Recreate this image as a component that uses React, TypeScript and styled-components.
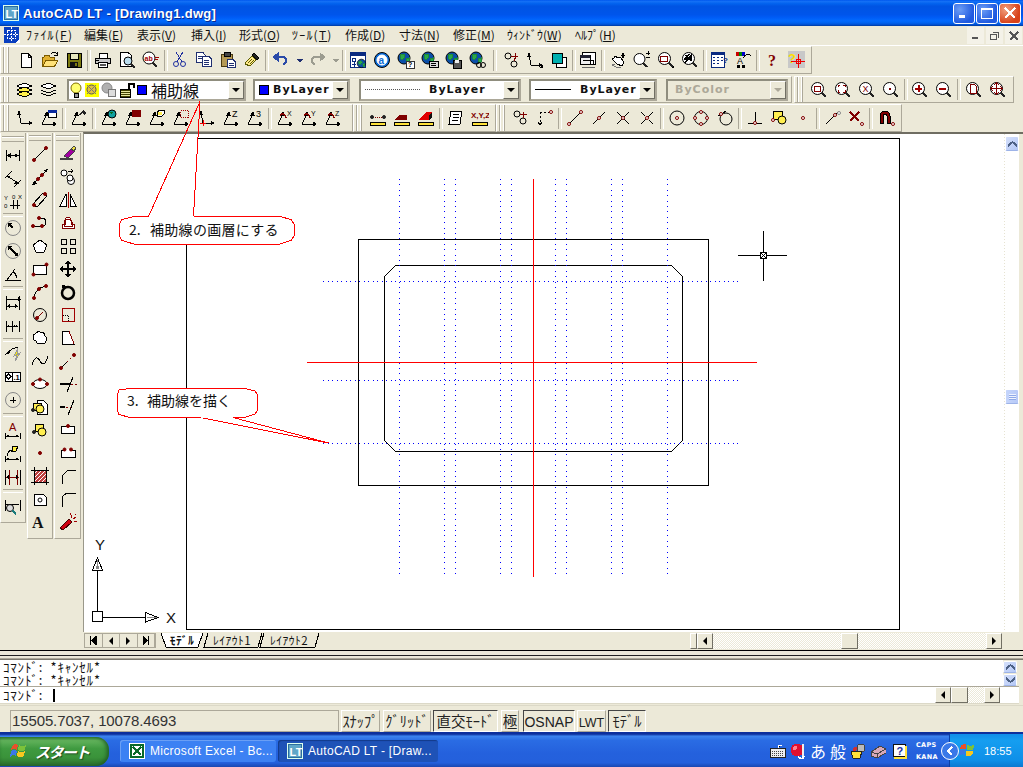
import React from "react";
import styled, { createGlobalStyle } from "styled-components";

const CREAM = "#ECE9D8";
const SHADE = "#ACA899";
const JP = `"Noto Sans CJK JP", "Liberation Sans", sans-serif`;

const Global = createGlobalStyle`
  html, body { margin: 0; padding: 0; background: ${CREAM}; overflow: hidden; }
  * { box-sizing: border-box; }
  svg { shape-rendering: crispEdges; display: block; flex: none; }
  svg text { shape-rendering: auto; }
`;

/* ---------- icon primitives ---------- */
type PP = { d: string; c?: string; f?: string; w?: number; strokeDasharray?: string };
const P = ({ d, c = "#000", f = "none", w = 1, strokeDasharray }: PP) => (
  <path d={d} stroke={c} fill={f} strokeWidth={w} strokeDasharray={strokeDasharray} />
);
const Box = ({ x, y, w, h, f = "none", c = "#000" }: { x: number; y: number; w: number; h: number; f?: string; c?: string }) => (
  <rect x={x + 0.5} y={y + 0.5} width={w} height={h} fill={f} stroke={c} />
);
const Dot = ({ x, y, r = 1.5, f = "#fff", c = "#800000" }: { x: number; y: number; r?: number; f?: string; c?: string }) => (
  <circle cx={x} cy={y} r={r} fill={f} stroke={c} style={{ shapeRendering: "auto" }} />
);
const Ring = ({ x, y, r, f = "none", c = "#000", w = 1 }: { x: number; y: number; r: number; f?: string; c?: string; w?: number }) => (
  <circle cx={x} cy={y} r={r} fill={f} stroke={c} strokeWidth={w} style={{ shapeRendering: "auto" }} />
);
const Tx = ({ x, y, s = 7, c = "#000", b = false, t }: { x: number; y: number; s?: number; c?: string; b?: boolean; t: string }) => (
  <text x={x} y={y} fontSize={s} fill={c} fontWeight={b ? 700 : 400} fontFamily="Liberation Sans, sans-serif">{t}</text>
);
const Mag = ({ children }: { children?: React.ReactNode }) => (
  <>
    <Ring x={7.5} y={7.5} r={6} f="#fff" />
    <P d="M12 12L16 16" c="#222" w={2} />
    {children}
  </>
);
const Axes = () => (
  <>
    <P d="M2 15L7 5M2 15H14" />
    <P d="M7 3l-2 3h3zM16 15l-3-2v4z" f="#000" />
  </>
);
const AxesV = () => (
  <>
    <P d="M3 3L5 14H15" />
    <P d="M3 2l-1 3h2zM16 14l-3-1.5v3z" f="#000" />
  </>
);
const Globe = ({ children }: { children?: React.ReactNode }) => (
  <>
    <Ring x={7} y={7} r={6} f="#0A4FA8" />
    <P d="M3 4L7 3 8 6 5 9 3 7zM9 8l3-1v4l-2 1z" c="#1E8A38" f="#29A84A" />
    {children}
  </>
);
const Rule = () => <Box x={1} y={13} w={15} h={3} f="#FFE23A" />;
const Marker = ({ x, y }: { x: number; y: number }) => <Dot x={x} y={y} />;
const Rot = ({ l }: { l: string }) => (
  <>
    <Axes />
    <P d="M4 6Q8 3 10 9" c="#800000" w={1.5} />
    <Tx x={11} y={7} s={7} t={l} />
  </>
);

const icons: Record<string, React.ReactNode> = {
  /* row 1 */
  new: <><P d="M4.5 2.5H11L14.5 6V16.5H4.5Z" f="#fff" /><P d="M11 2.5V6H14.5" /></>,
  open: <><P d="M1.5 15.5V6H3L4 4H8L9 6H13V15.5Z" c="#7A5A00" f="#E0B030" /><P d="M1.5 15.5L5 9H17L13.5 15.5Z" c="#7A5A00" f="#FFE27A" /><P d="M10 3Q13 0 16 3M16 1V4H13" /></>,
  save: <><Box x={2} y={2} w={14} h={14} f="#7C7A10" /><Box x={5} y={2} w={8} h={6} f="#E8E8C0" /><rect x={5} y={11} width={8} height={5} fill="#111" /><rect x={10} y={12} width={2} height={3} fill="#7C7A10" /></>,
  print: <><P d="M5 7V2H13V7" f="#fff" /><P d="M1.5 12V7.5H16.5V12Z" f="#C8C8C8" /><P d="M4.5 11H13.5V16H4.5Z" f="#fff" /><P d="M6 13H12M6 14.5H12" c="#555" /><P d="M2 9H5" /></>,
  preview: <><P d="M2.5 1.5H10L13 4V15H2.5Z" f="#fff" /><Ring x={10} y={10} r={4} f="#BDE" /><P d="M13 13L17 17" c="#222" w={2} /></>,
  spell: <><Ring x={7} y={7} r={6} f="#fff" /><Tx x={2.5} y={9.5} s={7} c="#A00000" b t="ab" /><P d="M13 6H17M13 8H16" c="#A00000" /><P d="M11 12L15 16" c="#222" w={2} /></>,
  cut: <><P d="M5 1L11 11M12 1L6 11" c="#1F2F9F" /><Ring x={5} y={13} r={2.5} c="#1F2F9F" /><Ring x={12} y={13} r={2.5} c="#1F2F9F" /></>,
  copy: <><P d="M1.5 1.5H8L10 4V11H1.5Z" f="#fff" c="#1F2F70" /><P d="M7.5 5.5H14L16.5 8V15.5H7.5Z" f="#fff" c="#1F2F70" /><P d="M3 5H7M3 7H7M9 9H14M9 11H14M9 13H14" c="#1F2F70" /></>,
  paste: <><P d="M2.5 3.5H13.5V15.5H2.5Z" f="#B59A55" c="#4A3A10" /><Box x={5} y={1} w={6} h={4} f="#444" /><P d="M8.5 8.5H14L16.5 11V16.5H8.5Z" f="#fff" c="#1F2F70" /><P d="M10 12H15M10 14H15" c="#1F2F70" /></>,
  match: <><P d="M11 2L16 7 14 9 9 4Z" f="#222" /><P d="M9 5L13 9 7 15 2 13 3 11Z" f="#FFE98A" c="#5A5A00" /><P d="M5 12L9 8M7 13L11 9" c="#5A5A00" /></>,
  undo: <><P d="M3 6H10Q15 6 14 11 13 13 11 13" c="#2A4AA8" w={2} /><P d="M1 6L6 2V10Z" f="#2A4AA8" c="#2A4AA8" /></>,
  redo: <><P d="M15 6H8Q3 6 4 11 5 13 7 13" c="#9C9C90" w={2} /><P d="M17 6L12 2V10Z" f="#9C9C90" c="#9C9C90" /></>,
  dropA: <path d="M6 8H13L9.5 11.5Z" fill="#1F2F70" />,
  dropB: <path d="M6 8H13L9.5 11.5Z" fill="#9C9C90" />,
  propsWin: <><Box x={1} y={1} w={15} h={15} f="#fff" c="#0A2A80" /><rect x={1} y={1} width={16} height={4} fill="#0A2A80" /><Box x={3} y={7} w={3} h={3} c="#0A2A80" /><P d="M3 13H7M5 10V16" c="#0A2A80" /><g transform="translate(7.5 7.5) scale(0.7)"><Globe /></g></>,
  aBlue: <><Ring x={9} y={9} r={7.5} f="#0A6CD8" /><Ring x={9} y={9} r={5} f="#fff" c="#fff" /><text x={5.5} y={12.5} fontSize={10} fontWeight={700} fill="#0A6CD8" fontFamily="Liberation Sans">a</text></>,
  gl1: <><Globe /><P d="M9 10H17V17H9Z" f="#fff" c="#333" /><Tx x={11} y={16} s={7} b t="?" /></>,
  gl2: <><Globe /><Box x={8} y={10} w={9} h={6} f="#ddd" /><P d="M10 12H15M10 14H15" /></>,
  gl3: <><Globe /><Box x={8} y={9} w={8} h={8} f="#555" /><rect x={10} y={9} width={4} height={3} fill="#eee" /></>,
  gl4: <><Globe /><Ring x={10} y={14} r={2.5} /><Ring x={14} y={14} r={2.5} /></>,
  track: <><Ring x={6} y={5} r={3} /><Ring x={12} y={13} r={3} /><P d="M9 5H16M13 2V8M12 7V10" c="#800000" /></>,
  ucsSm: <><AxesV /><path d="M17 17h-4l4-4z" fill="#000" /></>,
  layerSq: <><Box x={6} y={6} w={10} h={10} f="#fff" /><Box x={2} y={2} w={10} h={10} f="#00B0B0" /></>,
  plotWin: <><Box x={3} y={1} w={13} h={12} f="#fff" /><Box x={1} y={4} w={10} h={9} f="#EEE" /><rect x={1} y={4} width={10} height={3} fill="#223" /><P d="M4 9H14V13" /><P d="M3 16H16" c="#666" /></>,
  hand: <><P d="M3 8L8 13 13 15 15 11 11 6 9 7 6 5 5 7Z" f="#fff" /><P d="M6 13L3 14 7 16 12 16" c="#777" /><P d="M14 2V7M12 4.5H16" w={1.5} /></>,
  zoomRt: <><Ring x={6.5} y={8} r={5.5} f="#fff" /><P d="M10.5 12L14 16" c="#222" w={2} /><P d="M13 2H17M15 0V4M13 6H17" /></>,
  zoomW: <Mag><P d="M3 5.5H10V10H3Z" c="#800000" /><path d="M17 17h-3l3-3z" /></Mag>,
  zoomP: <Mag><P d="M8 3L4 8H7L4 12M5 4L10 10" w={1.5} /><path d="M11 2L7 6 11 9Z" /></Mag>,
  table: <><Box x={1} y={1} w={13} h={15} f="#fff" c="#0A2A80" /><rect x={1} y={1} width={13} height={3} fill="#0A2A80" /><P d="M3 6H5M7 6H9M11 6H13M3 9H5M7 9H9M11 9H13M3 12H5M7 12H9" c="#0A2A80" /><Tx x={13} y={12} s={8} b c="#0A2A80" t="?" /></>,
  aColor: <><rect x={2} y={1} width={3} height={4} fill="#C00" /><rect x={5} y={1} width={3} height={4} fill="#080" /><rect x={8} y={1} width={3} height={4} fill="#00C" /><Tx x={3} y={13} s={9} t="A" /><P d="M9 7Q13 1 17 5" /><rect x={3} y={14} width={3} height={3} /><rect x={8} y={14} width={3} height={3} /></>,
  qmark: <text x={4} y={15} fontSize={16} fontWeight={700} fill="#800000" fontFamily="Liberation Serif">?</text>,
  helpX: <><rect x={0} y={0} width={17} height={17} fill="#C8C8C8" /><text x={0} y={12} fontSize={13} fontWeight={700} fill="#FFE000" fontFamily="Liberation Sans">?</text><P d="M3 10H17M10 3V17" c="#F00000" /><Box x={8} y={8} w={4} h={4} c="#F00000" /></>,
  /* row 2 */
  layerMgr: <><P d="M1 5L8 2 16 5 8 8Z" f="#fff" /><P d="M1 9L8 6 16 9 8 12Z" f="#FFF04A" /><P d="M1 13L8 10 16 13 8 16Z" f="#FFF04A" /></>,
  layerPrev: <><P d="M1 5L8 2 16 5 8 8Z" f="#fff" /><P d="M1 9L8 12 16 9M1 12L8 15 16 12" /></>,
  bulb: <><Ring x={8} y={7} r={5} f="#FFFF70" c="#807000" /><P d="M6 12H10V16H6Z" f="#999" /></>,
  sun: <><Box x={2} y={2} w={13} h={13} f="#FFFF00" c="#FFFF00" /><Ring x={8.5} y={8.5} r={4.5} f="#E0C040" c="#555" /><P d="M4 4L13 13M13 4L4 13" c="#777" /></>,
  vp: <><Ring x={7} y={7} r={5} f="#B0B0B0" c="#888" /><Box x={8} y={8} w={7} h={7} f="#DDD" c="#777" /></>,
  lock: <><Box x={2} y={8} w={10} h={8} f="#444400" /><P d="M3 10H12M3 12H12M3 14H12" c="#E8E8A0" /><P d="M11 8V3H16V7" w={1.5} /></>,
  z1: <Mag><P d="M4 5.5H10V10H4Z" c="#800000" /></Mag>,
  z2: <Mag><P d="M4 6V4H6M9 4H11V6M4 9V11H6M11 9V11H9" c="#800000" /></Mag>,
  z3: <Mag><Tx x={4.5} y={11} s={9} c="#800000" t="X" /></Mag>,
  z4: <Mag><Box x={6.5} y={6.5} w={1} h={1} c="#800000" /></Mag>,
  zin: <Mag><P d="M4 7.5H11M7.5 4V11" c="#A00000" w={2} /></Mag>,
  zout: <Mag><P d="M4 7.5H11" c="#A00000" w={2} /></Mag>,
  zall: <Mag><P d="M5 3H9L11 5V12H5Z" f="#fff" c="#800000" /></Mag>,
  zext: <Mag><P d="M2 7.5H13M7.5 2V13" c="#800000" /><P d="M4 5L2 7.5 4 10M11 5L13 7.5 11 10M5 4L7.5 2 10 4M5 11L7.5 13 10 11" c="#800000" /></Mag>,
  /* row 3 */
  ucs: <AxesV />,
  ucsPrev: <><Axes /><Box x={8} y={1} w={8} h={7} f="#fff" /><rect x={8} y={1} width={9} height={3} fill="#0A2A9F" /></>,
  ucsObj: <><Axes /><path d="M8 6L13 1 16 4 14 6 12 4 10 6Z" fill="#222" /></>,
  ucsWorld: <><Axes /><Ring x={12} y={5} r={4} f="#10A0A0" /><path d="M10 3L13 3 12 6Z" fill="#0A6C20" /></>,
  ucsDark: <><Axes /><rect x={8} y={1} width={9} height={7} fill="#800000" /></>,
  ucsFace: <><Axes /><P d="M9 3L12 1H16V5L14 7H9Z" f="#FFF" /><rect x={10} y={3} width={4} height={3} fill="#FFEE50" /></>,
  ucsView: <><Axes /><P d="M8.5 1.5H16.5V8.5H8.5Z" c="#A00000" strokeDasharray="1 1" /></>,
  ucsOrigin: <><AxesV /><P d="M2 14H8M5 11V17" c="#F00000" /></>,
  ucsZ: <><Axes /><Tx x={10} y={8} s={9} t="Z" /></>,
  ucs3: <><Axes /><Tx x={10} y={8} s={9} t="3" /></>,
  rotX: <Rot l="X" />,
  rotY: <Rot l="Y" />,
  rotZ: <Rot l="Z" />,
  dist: <><P d="M2 8H15" c="#800000" strokeDasharray="1 1" /><Dot x={3} y={8} f="#222" c="#222" /><Dot x={15} y={8} f="#222" c="#222" /><Rule /></>,
  area: <><path d="M2 11L6 6H14V11Z" fill="#800000" /><Rule /></>,
  mass: <><path d="M2 11L6 6H12V11Z" fill="#E00000" /><path d="M12 6L15 3V8L12 11Z" fill="#111" /><path d="M6 6L9 3H15L12 6Z" fill="#E00000" /><Rule /></>,
  list: <><P d="M4 2H15L13 15H2Z" f="#fff" /><P d="M6 5H12M5.5 8H12M5 11H11" /></>,
  xyz: <><Tx x={0} y={9} s={8} c="#800000" b t="X,Y,Z" /><Rule /></>,
  trk2: <><Ring x={5} y={5} r={3} /><Ring x={11} y={12} r={3} /><P d="M8 5H15M11 3V9" c="#800000" /></>,
  from: <><P d="M4 3H14M4 3V15" strokeDasharray="2 2" /><Dot x={15} y={3} /><P d="M2 13L4 16 6 13" /></>,
  end: <><P d="M3 15L15 3" /><Marker x={3} y={15} /><Marker x={15} y={3} /></>,
  mid: <><P d="M3 15L15 3" /><Marker x={9} y={9} /></>,
  inter: <><P d="M3 3L15 15M15 3L3 15" /><Marker x={9} y={9} /></>,
  appint: <><P d="M3 15L15 3M3 3L7 7M11 11L15 15" /><Marker x={9} y={9} /></>,
  center: <><Ring x={9} y={9} r={7} /><Marker x={9} y={9} /></>,
  quad: <><Ring x={9} y={9} r={6.5} /><Marker x={9} y={3} /><Marker x={9} y={15} /><Marker x={3} y={9} /><Marker x={15} y={9} /></>,
  tan: <><Ring x={10} y={10} r={6} /><P d="M2 7L10 2" /><Marker x={5} y={5} /></>,
  perp: <><P d="M2 14H16M9 3V14" /><Marker x={9} y={14} /></>,
  insert: <><Box x={3} y={2} w={9} h={8} f="#FFEE50" /><Ring x={12} y={11} r={4} f="#FFEE50" /><Marker x={3} y={11} /></>,
  node: <Marker x={9} y={9} />,
  near: <><P d="M3 15L15 3" /><Marker x={12} y={6} /><Dot x={16} y={4} c="#888" /></>,
  none: <><P d="M3 3L12 12M12 3L3 12" c="#800000" w={2.5} /><Dot x={15} y={15} /></>,
  mag: <><P d="M3 14V7Q3 2 8 2T13 7V14H10V7Q10 5 8 5T6 7V14Z" f="#800000" /><Dot x={16} y={15} /></>,
  /* column 1 */
  dimL: <><P d="M2 3V14M15 3V14M3 8.5H14" /><P d="M3 8.5L6 7V10ZM14 8.5L11 7V10Z" f="#000" /></>,
  dimA: <><P d="M1 8L8 1M10 17L17 10M3 6L14 13" /><P d="M3 6l3 0-1 2zM14 13l-3 0 1-2z" f="#000" /></>,
  ord: <><Tx x={0} y={7} s={6} t="Y" /><Tx x={8} y={6} s={6} t="0" /><Tx x={14} y={6} s={6} t="X" /><Tx x={0} y={15} s={6} t="0" /><P d="M6 12H16M9 7V16M13 7V16" /></>,
  dimR: <><Ring x={9} y={9} r={7.5} c="#888" /><P d="M5 5L9 9" w={1.5} /><path d="M4 4h4l-4 4z" /></>,
  dimD: <><Ring x={9} y={9} r={7.5} c="#888" /><P d="M5 5L13 13" w={1.5} /><path d="M4 4h4l-4 4zM14 14h-4l4-4z" /></>,
  dimAng: <><P d="M1 15H17M3 15L11 4M9 7Q13 9 12 13" /><path d="M8 7h3v3z" /></>,
  dimB: <><P d="M2 2V16M15 2V16M3 5H17M3 12H14" /><path d="M3 12l3-2v4zM14 12l-3-2v4zM17 5l-3-2v4z" /></>,
  dimC: <><P d="M2 4V15M8 4V15M15 4V15M3 9H14" /><path d="M3 9l2-1.5v3zM9 9l2-1.5v3zM14 9l-2-1.5v3z" /></>,
  leader: <><P d="M1 10L8 4 14 2" /><path d="M1 10l3-4 2 2z" /><path d="M14 3L10 11 13 10 11 16 16 8 13 9Z" fill="#FFF000" stroke="#999" /></>,
  tol: <><Box x={1} y={4} w={15} h={9} f="#fff" /><P d="M8 4V13" /><path d="M4.5 6L7 8.5 4.5 11 2 8.5Z" fill="none" stroke="#000" /><Tx x={9.5} y={11.5} s={7.5} b t=".1" /></>,
  cen: <><Ring x={9} y={9} r={7.5} c="#888" /><P d="M6 9H12M9 6V12" /></>,
  tA: <><Tx x={5} y={9} s={11} c="#800000" t="A" /><P d="M1 11V17M16 11V17M2 14H15" /><path d="M2 14l3-1.5v3zM15 14l-3-1.5v3z" /></>,
  tB: <><path d="M9 1h5l-2 5H8z" fill="#FFF040" stroke="#000" /><P d="M1 11V17M16 11V17M2 14H15M3 11Q4 5 8 5" /><path d="M2 14l3-1.5v3zM15 14l-3-1.5v3z" /></>,
  tC: <><P d="M1 2V17M16 2V17" c="#000" /><P d="M5 2V17M13 2V17M2 9H15" c="#800000" /><path d="M2 9l3-2v4zM15 9l-3-2v4z" fill="#000" /></>,
  tD: <><P d="M1 3V14M16 3V14M2 7H15" /><Ring x={6} y={11} r={3.5} f="#ddd" /><P d="M8 13.5L12 17" c="#1A7A7A" w={2} /></>,
  /* column 2 */
  line: <><P d="M3 15L15 3" /><Dot x={3} y={15} f="#800000" /><Dot x={15} y={3} f="#800000" /></>,
  xline: <><P d="M1 17L17 1" /><path d="M17 1l-5 1 3 3zM1 17l5-1-3-3z" /><Dot x={7} y={11} f="#800000" /><Dot x={11} y={7} f="#800000" /></>,
  mline: <><P d="M2 13L12 2 16 5 6 16Z" /><Dot x={3} y={14} f="#800000" /><Dot x={14} y={3} f="#800000" /></>,
  pline: <><P d="M2 12H11Q15 12 15 8T10 4H7" /><Dot x={2} y={12} f="#800000" /><Dot x={11} y={12} f="#800000" /><Dot x={8} y={4} f="#800000" /></>,
  polygon: <P d="M9 3L16 8 13 15H5L2 8Z" f="#fff" />,
  rect: <><Box x={2} y={5} w={13} h={9} f="#fff" /><Dot x={2.5} y={14.5} f="#800000" /><Dot x={15.5} y={4.5} f="#800000" /></>,
  arc: <><P d="M3 15Q4 5 15 3" /><Dot x={3} y={15} f="#800000" /><Dot x={8} y={6} f="#800000" /><Dot x={15} y={3} f="#800000" /></>,
  circle: <><Ring x={9} y={9} r={6.5} /><P d="M6 12L12 6" c="#800000" /><Dot x={6} y={12} f="#800000" /></>,
  cloud: <P d="M4 5Q7 1 10 4 14 3 14 7 17 9 15 12 14 16 10 14 6 16 5 12 1 11 3 7 2 5 4 5Z" f="#fff" />,
  spline: <P d="M1 13Q5 1 9 9T17 4" />,
  ellipse: <><ellipse cx={9} cy={9} rx={7} ry={4.5} fill="#fff" stroke="#000" style={{ shapeRendering: "auto" }} /><Dot x={9} y={4.5} f="#800000" /><Dot x={2} y={9} f="#800000" /><Dot x={16} y={9} f="#800000" /></>,
  block: <><P d="M6 2H12L16 6V16H6Z" f="#fff" /><Box x={2} y={5} w={8} h={7} f="#FFEE50" /><Ring x={9} y={11} r={4} f="#FFEE50" /><Dot x={2} y={12} f="#222" c="#222" /></>,
  wblock: <><Box x={4} y={3} w={8} h={7} f="#FFEE50" /><Ring x={11} y={11} r={4} f="#FFEE50" /><Dot x={3} y={11} f="#222" c="#222" /></>,
  point: <Dot x={9} y={9} f="#800000" />,
  hatch: <><rect x={3} y={3} width={12} height={12} fill="#C04040" /><P d="M3 7L7 3M3 11L11 3M3 15L15 3M7 15L15 7M11 15L15 11" c="#fff" /><P d="M0 3H18M0 15H18M3 0V18M15 0V18" /></>,
  region: <><P d="M3 4H12L15 7V15H3Z" f="#fff" /><Ring x={9} y={10} r={2} /></>,
  text: <text x={1} y={15} fontSize={16} fontWeight={700} fill="#111" fontFamily="Liberation Serif">A</text>,
  /* column 3 */
  erase: <><path d="M5 11L13 3 16 6 9 13Z" fill="#A000A0" stroke="#444" /><path d="M12 4L15 1 17 3 15 6Z" fill="#F0E040" stroke="#444" /><P d="M1 14H14" c="#444" w={1.5} /></>,
  copyO: <><Ring x={5} y={5} r={3} f="#fff" /><Ring x={12} y={13} r={3.5} f="#fff" /><Ring x={11} y={10} r={3} f="#fff" /><P d="M9 3L14 3M12 1L14 3 12 5" /></>,
  mirror: <><P d="M1 15L7 3V15Z" f="#fff" /><P d="M17 15L11 3V15Z" f="#fff" /><P d="M9 1V17" c="#A00000" /></>,
  offset: <><P d="M3 14V10H6V7Q6 3 9 3T12 7V10H15V14Z" f="#fff" c="#800000" /><P d="M5 12V8Q5 5 9 5T13 8V12Z" f="none" c="#800000" /></>,
  array: <><Box x={2} y={2} w={5} h={5} /><Box x={11} y={2} w={5} h={5} /><Box x={2} y={11} w={5} h={5} /><Box x={11} y={11} w={5} h={5} /></>,
  move: <><P d="M9 2V16M2 9H16" w={1.5} /><path d="M9 0l3 4H6zM9 18l3-4H6zM0 9l4-3v6zM18 9l-4-3v6z" /></>,
  rotate: <><Ring x={9} y={10} r={6} w={2.5} /><path d="M3 2l5 1-4 5z" /></>,
  scale: <><Box x={3} y={2} w={12} h={13} c="#A00000" /><P d="M3.5 9.5H9.5V15.5" strokeDasharray="1 1" /></>,
  stretch: <><P d="M3 2H10L15 15H3Z" f="#fff" /><P d="M10 2L15 15" c="#800000" /></>,
  length: <><P d="M2 16L8 10" /><P d="M8 10L15 3" c="#800000" strokeDasharray="2 2" /><Dot x={2} y={16} f="#800000" /><Dot x={15} y={3} f="#800000" /></>,
  trim: <><P d="M8 17L14 2" /><P d="M1 9H11" w={2} /><P d="M12 9H18" c="#800000" strokeDasharray="2 2" /></>,
  extend: <><P d="M9 17L15 2" /><P d="M1 9H6" w={2} /><P d="M7 9H12" c="#800000" strokeDasharray="2 2" /></>,
  break1: <><Box x={2} y={5} w={13} h={7} f="#fff" /><Dot x={9} y={5} f="#800000" /></>,
  break2: <><Box x={2} y={6} w={14} h={7} f="#fff" /><rect x={6} y={5} width={5} height={2} fill="#fff" /><Dot x={5.5} y={5.5} f="#800000" /><Dot x={12} y={5.5} f="#800000" /></>,
  chamfer: <P d="M3 17V9L9 3H17" />,
  fillet: <P d="M3 17V10Q3 3 11 3H17" />,
  explode: <><path d="M1 15L10 6 13 9 4 17Z" fill="#D00010" stroke="#400" /><P d="M12 5L13 2M14 6L17 4M15 8L18 8M11 2L11 0M16 2L17 1" c="#A00000" /></>,
};

/* ---------- window frame ---------- */
const Screen = styled.div`
  position: relative;
  width: 1023px;
  height: 767px;
  overflow: hidden;
  display: flex;
  flex-direction: column;
  background: ${CREAM};
  font-family: ${JP};
`;
const TitleBar = styled.header`
  height: 26px;
  display: flex;
  align-items: center;
  padding: 0 2px 0 3px;
  background: linear-gradient(#0058ee 0%, #1470f5 6%, #0262ee 14%, #0054e3 24%, #0055eb 56%, #005bf5 66%, #026afe 80%, #0062ef 88%, #0052d6 94%, #003a9e 100%);
`;
const TitleText = styled.span`
  margin-left: 4px;
  flex: 1;
  color: #fff;
  font: 700 13px "Liberation Sans", sans-serif;
  letter-spacing: 0.32px;
  text-shadow: 1px 1px #0a2a90;
`;
const CapButton = styled.div<{ $red?: boolean }>`
  width: 22px;
  height: 21px;
  margin-left: 1px;
  border: 1px solid #fff;
  border-radius: 3px;
  display: flex;
  align-items: center;
  justify-content: center;
  background: ${(p) => (p.$red ? "radial-gradient(circle at 30% 30%, #f0a080, #d8421a 70%)" : "radial-gradient(circle at 30% 30%, #6b9cf5, #1f5ae0 70%)")};
`;
const MenuBar = styled.nav`
  height: 20px;
  display: flex;
  align-items: flex-start;
  padding: 1px 0 0 4px;
  border-bottom: 1px solid #fff;
`;
const MenuIcon = styled.div`
  width: 22px;
`;
const MenuItem = styled.span<{ $w: number; $sp: number }>`
  width: ${(p) => p.$w}px;
  font-size: 12px;
  line-height: 15px;
  letter-spacing: ${(p) => p.$sp}px;
  color: #111;
  white-space: nowrap;
`;
const MdiControls = styled.div`
  margin-left: auto;
  display: flex;
  gap: 2px;
  padding-right: 1px;
`;
const MdiButton = styled.div`
  width: 17px;
  height: 17px;
  background: #f4f2e8;
  display: flex;
  align-items: center;
  justify-content: center;
`;
const Band = styled.div<{ $h: number; $pt?: number; $pb?: number }>`
  height: ${(p) => p.$h}px;
  padding: ${(p) => p.$pt ?? 0}px 0 ${(p) => p.$pb ?? 0}px;
  display: flex;
  align-items: stretch;
`;
const Toolbar = styled.div<{ $w: number; $ml?: number }>`
  width: ${(p) => p.$w}px;
  margin-left: ${(p) => p.$ml ?? 0}px;
  display: flex;
  align-items: center;
  overflow: hidden;
  border-top: 1px solid #fff;
  border-left: 1px solid #fff;
  border-bottom: 1px solid ${SHADE};
  border-right: 1px solid ${SHADE};
`;
const Grip = styled.div`
  flex: none;
  width: 6px;
  height: 100%;
  margin: 0 4px 0 2px;
  border-left: 1px solid ${SHADE};
  border-right: 1px solid ${SHADE};
  box-shadow: inset 1px 0 #fff, inset -1px 0 #fff;
`;
const ToolBtn = styled.div<{ $w?: number }>`
  flex: none;
  width: ${(p) => p.$w ?? 24}px;
  height: 23px;
  display: flex;
  align-items: center;
  justify-content: center;
`;
const SepV = styled.div<{ $w: number }>`
  flex: none;
  width: ${(p) => p.$w}px;
  height: 21px;
  display: flex;
  justify-content: center;
  &::after {
    content: "";
    width: 2px;
    border-left: 1px solid ${SHADE};
    border-right: 1px solid #fff;
  }
`;
const Combo = styled.div<{ $w: number; $gap: number; $off?: boolean }>`
  flex: none;
  width: ${(p) => p.$w}px;
  margin-left: ${(p) => p.$gap}px;
  height: 22px;
  display: flex;
  align-items: center;
  border: 2px solid #8f8d7e;
  border-right-color: ${SHADE};
  border-bottom-color: ${SHADE};
  background: ${(p) => (p.$off ? CREAM : "#fff")};
  overflow: hidden;
`;
const ComboSwatch = styled.span`
  width: 10px;
  height: 10px;
  margin: 0 4px 0 4px;
  flex: none;
  background: #0000ff;
  border: 1px solid #000;
`;
const WideLabel = styled.span<{ $off?: boolean; $ml?: number }>`
  margin-left: ${(p) => p.$ml ?? 0}px;
  font: 700 11px "DejaVu Sans", sans-serif;
  letter-spacing: 1px;
  color: ${(p) => (p.$off ? SHADE : "#111")};
  white-space: nowrap;
`;
const LayerName = styled.span`
  font-size: 16px;
  line-height: 18px;
  color: #111;
`;
const Spring = styled.span`
  flex: 1;
`;
const ArrowBtn = styled.span<{ $off?: boolean }>`
  flex: none;
  width: 16px;
  height: 18px;
  background: ${CREAM};
  border: 1px solid;
  border-color: #fff #716f64 #716f64 #fff;
  display: flex;
  align-items: center;
  justify-content: center;
  &::after {
    content: "";
    border: 4px solid transparent;
    border-top: 4px solid ${(p) => (p.$off ? SHADE : "#000")};
    border-bottom: 0;
  }
`;
const LineSample = styled.span<{ $dotted?: boolean; $w: number }>`
  flex: none;
  width: ${(p) => p.$w}px;
  margin: 0 9px 0 4px;
  border-top: 1px ${(p) => (p.$dotted ? "dotted #555" : "solid #000")};
`;

/* ---------- main area ---------- */
const Main = styled.main`
  flex: none;
  height: 518px;
  display: flex;
`;
const Dock = styled.aside`
  width: 83px;
  flex: none;
  display: flex;
  align-items: flex-start;
  padding-top: 1px;
  gap: 1px;
`;
const ToolColumn = styled.div<{ $w: number; $h: number }>`
  flex: none;
  width: ${(p) => p.$w}px;
  height: ${(p) => p.$h}px;
  display: flex;
  flex-direction: column;
  align-items: center;
  border-left: 1px solid #fff;
  border-right: 1px solid ${SHADE};
  border-bottom: 1px solid ${SHADE};
`;
const GripH = styled.div<{ $h: number }>`
  flex: none;
  width: 100%;
  height: ${(p) => p.$h}px;
  display: flex;
  align-items: center;
  padding: 0 1px;
  &::after {
    content: "";
    width: 100%;
    height: 4px;
    background: ${CREAM};
    border-top: 1px solid ${SHADE};
    border-bottom: 1px solid ${SHADE};
    box-shadow: inset 0 1px #fff;
  }
`;
const SepH = styled.div<{ $h: number }>`
  flex: none;
  width: 100%;
  height: ${(p) => p.$h}px;
  display: flex;
  align-items: center;
  padding: 0 2px;
  &::after {
    content: "";
    width: 100%;
    height: 2px;
    border-top: 1px solid ${SHADE};
    border-bottom: 1px solid #fff;
  }
`;
const Workspace = styled.section`
  flex: 1;
  min-width: 0;
  display: flex;
  flex-direction: column;
`;
const CanvasRow = styled.div`
  flex: 1;
  display: flex;
  padding-right: 4px;
  border-top: 2px solid #6f6d62;
  border-left: 1px solid #9a988a;
`;
const Canvas = styled.div`
  flex: 1;
  background: #fff;
`;
const dotted = `repeating-conic-gradient(#ecE9d8 0 25%, #fff 0 50%) 0 0 / 2px 2px`;
const VScroll = styled.div`
  flex: none;
  width: 16px;
  display: flex;
  flex-direction: column;
  align-items: flex-end;
  background: repeating-linear-gradient(#e6e3d2 0 1px, #fff 1px 3px) 1px 0 / 1px 100% no-repeat, #fff;
  padding-top: 2px;
`;
const XpArrow = styled.div<{ $mt?: number; $h?: number }>`
  width: 14px;
  height: ${(p) => p.$h ?? 15}px;
  margin-top: ${(p) => p.$mt ?? 0}px;
  display: flex;
  align-items: center;
  justify-content: center;
  background: linear-gradient(135deg, #d5e0fb, #b4c8f6);
  border: 1px solid #fff;
  border-bottom: 1px solid #9db3e8;
  border-radius: 2px;
`;
const Thumb = styled(XpArrow)`
  margin-top: 238px;
  background: linear-gradient(90deg, #c5d5fb, #b7c9f7);
  flex-direction: column;
  gap: 1px;
`;
const ThumbLine = styled.span`
  width: 7px;
  height: 1px;
  background: #eef3fe;
  box-shadow: 0 1px #8fa9e8;
`;
const TabRow = styled.div`
  height: 18px;
  flex: none;
  display: flex;
  align-items: flex-start;
  padding: 1px 0 0 1px;
`;
const NavGroup = styled.div`
  display: flex;
  width: 72px;
  height: 15px;
  border: 1px solid ${SHADE};
`;
const NavBtn = styled.div`
  flex: 1;
  display: flex;
  align-items: center;
  justify-content: center;
  border-right: 1px solid ${SHADE};
  background: ${CREAM};
`;
const Tab = styled.div<{ $w: number; $ml: number; $on?: boolean }>`
  position: relative;
  flex: none;
  width: ${(p) => p.$w}px;
  height: 15px;
  margin-left: ${(p) => p.$ml}px;
  font-size: 11.5px;
  font-weight: ${(p) => (p.$on ? 700 : 400)};
  line-height: 14px;
  text-align: center;
  letter-spacing: 0.5px;
  color: #111;
  z-index: ${(p) => (p.$on ? 1 : 0)};
`;
const TabShape = styled.svg`
  position: absolute;
  inset: 0;
  z-index: -1;
`;
const HPart = styled.div`
  flex: 1;
`;
const ClassicBtn = styled.div<{ $w: number; $ml?: number; $h?: number }>`
  flex: none;
  width: ${(p) => p.$w}px;
  height: ${(p) => p.$h ?? 16}px;
  margin-left: ${(p) => p.$ml ?? 0}px;
  background: ${CREAM};
  border: 1px solid;
  border-color: #fff #716f64 #716f64 #fff;
  display: flex;
  align-items: center;
  justify-content: center;
`;
const HTrack = styled.div<{ $w: number }>`
  flex: none;
  width: ${(p) => p.$w}px;
  height: 16px;
  display: flex;
  background: ${dotted};
`;
const Tri = styled.span<{ $dir: "l" | "r" }>`
  width: 0;
  height: 0;
  border: 4px solid transparent;
  ${(p) => (p.$dir === "l" ? "border-right: 4px solid #000; border-left: 0;" : "border-left: 4px solid #000; border-right: 0;")}
`;
const Splitter = styled.div`
  height: 9px;
  flex: none;
  border-top: 1px solid #000;
  position: relative;
  &::after {
    content: "";
    display: block;
    margin-top: 4px;
    height: 2px;
    border-top: 1px solid #222;
    border-bottom: 1px solid ${SHADE};
  }
`;
const CommandArea = styled.section`
  height: 46px;
  flex: none;
  padding-right: 4px;
  display: flex;
  flex-direction: column;
  border-top: 1px solid #7c7a6c;
`;
const LogRow = styled.div`
  height: 27px;
  flex: none;
  display: flex;
  background: #fff;
  border-bottom: 1px solid ${SHADE};
`;
const Log = styled.div`
  flex: 1;
  padding: 0 0 0 3px;
  font-size: 13px;
  line-height: 13px;
  letter-spacing: 0.8px;
  white-space: pre;
  color: #111;
`;
const LogScroll = styled.div`
  width: 16px;
  flex: none;
  display: flex;
  flex-direction: column;
  gap: 1px;
  padding-top: 1px;
  background: ${CREAM};
`;
const InputRow = styled.div`
  height: 17px;
  flex: none;
  display: flex;
  align-items: flex-start;
  background: #fff;
  border-bottom: 1px solid #dcd9c8;
`;
const Prompt = styled.div`
  flex: 1;
  padding-left: 3px;
  font-size: 13px;
  line-height: 16px;
  letter-spacing: 0.8px;
  white-space: pre;
  color: #111;
`;
const Caret = styled.span`
  display: inline-block;
  width: 2px;
  height: 13px;
  margin-left: 2px;
  vertical-align: -2px;
  background: #000;
`;
const InputScroll = styled.div`
  width: 84px;
  flex: none;
  display: flex;
  padding-right: 20px;
`;
const StatusBar = styled.footer`
  flex: none;
  height: 27px;
  display: flex;
  align-items: flex-end;
  padding-left: 10px;
  border-top: 1px solid #dcd9c8;
`;
const Coords = styled.div`
  width: 329px;
  height: 22px;
  margin-right: 2px;
  padding-left: 1px;
  border: 1px solid ${SHADE};
  font: 15px/20px "Liberation Sans", sans-serif;
  letter-spacing: -0.12px;
  color: #333;
`;
const StatusBtn = styled.div<{ $w: number; $on?: boolean; $ml: number }>`
  flex: none;
  width: ${(p) => p.$w}px;
  height: 22px;
  margin-left: ${(p) => p.$ml}px;
  overflow: hidden;
  text-align: center;
  font-size: 14.5px;
  line-height: 20px;
  white-space: nowrap;
  color: #222;
  border: 1px solid;
  border-color: ${(p) => (p.$on ? "#444 #fff #fff #444" : "#fff #aca899 #aca899 #fff")};
`;
const Latin = styled.span<{ $size: number }>`
  font-family: "Liberation Sans", sans-serif;
  font-size: ${(p) => p.$size}px;
`;

/* ---------- taskbar ---------- */
const Taskbar = styled.footer`
  flex: none;
  height: 35px;
  display: flex;
  align-items: center;
  background: linear-gradient(#0c2f9c 0, #0c2f9c 6%, #3c83ee 12%, #2a6ce4 24%, #2461dd 60%, #2460dc 88%, #1a47b0 100%);
`;
const StartBtn = styled.div`
  width: 109px;
  height: 29px;
  margin-top: 3px;
  display: flex;
  align-items: center;
  gap: 7px;
  padding-left: 10px;
  border-radius: 0 13px 13px 0;
  background: linear-gradient(#3a8a3a 0, #62b35c 12%, #3f9a40 40%, #3a933a 70%, #2b6e2e 100%);
  box-shadow: inset -2px 0 4px #1f5a22;
  color: #fff;
  font-size: 15px;
  font-weight: 700;
  font-style: italic;
  letter-spacing: -1.6px;
  text-shadow: 1px 1px 1px #1d4a1d;
`;
const TaskBtn = styled.div<{ $w: number; $ml: number; $on?: boolean }>`
  flex: none;
  width: ${(p) => p.$w}px;
  height: 22px;
  margin: 3px 0 0 ${(p) => p.$ml}px;
  display: flex;
  align-items: center;
  gap: 5px;
  padding-left: 9px;
  border-radius: 3px;
  background: ${(p) => (p.$on ? "#1e52b7" : "#3c81f3")};
  box-shadow: ${(p) => (p.$on ? "inset 1px 1px 1px #123a8a" : "inset 1px 1px 0 #6a9ff5")};
  color: #fff;
  font: 12px "Liberation Sans", sans-serif;
  letter-spacing: 0.3px;
  white-space: nowrap;
`;
const TrayIcons = styled.div`
  margin: 3px 0 0 auto;
  display: flex;
  align-items: center;
  height: 30px;
`;
const TrayItem = styled.div<{ $w: number }>`
  flex: none;
  width: ${(p) => p.$w}px;
  display: flex;
  justify-content: center;
  color: #fff;
  font-size: 16px;
  line-height: 20px;
`;
const CapsKana = styled.div`
  flex: none;
  width: 37px;
  padding-left: 4px;
  color: #fff;
  font: 700 6.5px/12px "DejaVu Sans", sans-serif;
  letter-spacing: 0.3px;
`;
const Tray = styled.div`
  flex: none;
  width: 74px;
  height: 33px;
  margin-top: 2px;
  display: flex;
  align-items: center;
  background: linear-gradient(#0f8de8 0, #159ef0 20%, #0e8fe8 80%, #0b79d0 100%);
  border-left: 1px solid #0a3fa8;
`;
const Chevron = styled.div`
  flex: none;
  width: 18px;
  height: 18px;
  margin-left: -9px;
  border-radius: 50%;
  border: 1px solid #fff;
  background: #3a78e8;
  display: flex;
  align-items: center;
  justify-content: center;
`;
const Clock = styled.span`
  margin-left: 8px;
  color: #fff;
  font: 11px "Liberation Sans", sans-serif;
`;
const Overlay = styled.svg`
  position: absolute;
  top: 0;
  left: 0;
  pointer-events: none;
`;

/* ---------- data ---------- */
type Item = string | number;
const row1: Item[] = ["new", "open", "save", 5, "print", "preview", "spell", 5, "cut", "copy", "paste", "match", 5, "undo", "dropA", "redo", "dropB", 5, "propsWin", "aBlue", "gl1", "gl2", "gl3", "gl4", 9, "track", "ucsSm", "layerSq", 5, "plotWin", 6, "hand", "zoomRt", "zoomW", "zoomP", 5, "table", "aColor", 6, "qmark", "helpX"];
const row2a = ["layerMgr", "layerPrev"];
const row2b: Item[] = ["z1", "z2", "z3", "z4", 5, "zin", "zout", 6, "zall", "zext"];
const row3a: Item[] = ["ucs", "ucsPrev", 6, "ucsObj", 6, "ucsWorld", "ucsDark", "ucsFace", "ucsView", -2, "ucsOrigin", "ucsZ", "ucs3", 6, "rotX", "rotY", "rotZ"];
const row3b: Item[] = ["dist", "area", "mass", 6, "list", "xyz"];
const row3c: Item[] = ["trk2", "from", 6, "end", "mid", "inter", "appint", 6, "center", "quad", "tan", 6, "perp", "insert", "node", 5, "near", "none", 6, "mag"];
const col1: Item[] = ["dimL", "dimA", "ord", 3, "dimR", "dimD", "dimAng", 6, "dimB", "dimC", 5, "leader", "tol", "cen", 8, "tA", "tB", "tC", 6, "tD"];
const col2 = ["line", "xline", "mline", "pline", "polygon", "rect", "arc", "circle", "cloud", "spline", "ellipse", "block", "wblock", "point", "hatch", "region", "text"];
const col3 = ["erase", "copyO", "mirror", "offset", "array", "move", "rotate", "scale", "stretch", "length", "trim", "extend", "break1", "break2", "chamfer", "fillet", "explode"];
const menus: [string, string, number, number][] = [
  ["ﾌｧｲﾙ", "F", 58, 1.2], ["編集", "E", 53, 0], ["表示", "V", 54, 0], ["挿入", "I", 48, 0], ["形式", "O", 53, 0], ["ﾂｰﾙ", "T", 53, 1.2],
  ["作成", "D", 54, 0], ["寸法", "N", 54, 0], ["修正", "M", 54, 0], ["ｳｨﾝﾄﾞｳ", "W", 68, 0], ["ﾍﾙﾌﾟ", "H", 60, 0],
];
const vDots = [399.5, 444.5, 455.5, 500.5, 511.5, 555.5, 566.5, 611.5, 622.5, 667.5];
const hDots = [281.5, 380.5, 443.5];

const Icon = ({ n }: { n: string }) => (
  <svg width={18} height={18} viewBox="0 0 18 18">{icons[n]}</svg>
);
const Items = ({ list }: { list: Item[] }) => (
  <>
    {list.map((it, i) =>
      typeof it === "number" ? (
        it < 0 ? <ToolBtn key={i} $w={-it} /> : <SepV key={i} $w={it} />
      ) : (
        <ToolBtn key={i} $w={it.startsWith("drop") ? 12 : 24}><Icon n={it} /></ToolBtn>
      )
    )}
  </>
);
const ColItems = ({ list }: { list: Item[] }) => (
  <>
    {list.map((it, i) =>
      typeof it === "number" ? <SepH key={i} $h={it} /> : <ToolBtn key={i}><Icon n={it} /></ToolBtn>
    )}
  </>
);
const LtLogo = () => (
  <svg width={16} height={16} viewBox="0 0 16 16">
    <rect x={0.5} y={0.5} width={15} height={15} fill="#2C6E9E" stroke="#dfe" />
    <rect x={2} y={2} width={12} height={12} fill="#5FA6C8" />
    <text x={2.5} y={13} fontSize={11} fontWeight={700} fill="#fff" fontFamily="Liberation Sans">LT</text>
  </svg>
);
const Flag = ({ s = 18 }: { s?: number }) => (
  <svg width={s} height={s} viewBox="0 0 18 18">
    <path d="M2 4Q5 1 8 3L7 8Q4 6 1 8Z" fill="#E8502A" />
    <path d="M9 3Q12 5 16 3L15 8Q11 10 8 8Z" fill="#7CC23A" />
    <path d="M1 9Q4 7 7 9L6 14Q3 12 0 15Z" fill="#3A78E8" />
    <path d="M8 9Q11 11 15 9L14 14Q10 16 7 14Z" fill="#F8C820" />
  </svg>
);
const TrayPic = ({ n }: { n: string }) => {
  const pics: Record<string, React.ReactNode> = {
    kbd: <><rect x={0.5} y={5.5} width={15} height={9} fill="#eee" stroke="#222" /><path d="M2 8H14M2 10H14M2 12H14" stroke="#444" strokeDasharray="1 1" /><path d="M8 5V2H12" stroke="#fff" /></>,
    ball: <><circle cx={7} cy={7} r={6.5} fill="#E01030" /><circle cx={5} cy={5} r={2} fill="#FF8090" /><path d="M13 1V14" stroke="#eee" strokeWidth={2} /><path d="M8 14L12 16 14 13" stroke="#fff" strokeWidth={2} fill="none" /></>,
    tools: <><circle cx={11} cy={5} r={4} fill="#bbb" stroke="#444" /><path d="M1 8H12L10 15H3Z" fill="#FFE23A" stroke="#222" /><circle cx={5} cy={6} r={2} fill="#D03030" /></>,
    box: <><path d="M1 9L10 3 16 6 16 10 7 15 1 13Z" fill="#D8A8B8" stroke="#444" /><path d="M1 9L7 11 16 6M7 11V15" stroke="#444" fill="none" /></>,
    help: <><rect x={1.5} y={1.5} width={12} height={12} fill="#fff" stroke="#111" /><path d="M2 15H14V3" stroke="#FFE23A" fill="none" strokeWidth={2} /><text x={4.5} y={12} fontSize={11} fontWeight={700} fill="#2030A0" fontFamily="Liberation Sans">?</text></>,
  };
  return <svg width={16} height={16} viewBox="0 0 16 16">{pics[n]}</svg>;
};
const XpChevron = ({ up }: { up: boolean }) => (
  <svg width={9} height={6} viewBox="0 0 9 6"><path d={up ? "M0 5L4.5 1 9 5" : "M0 1L4.5 5 9 1"} stroke="#4d6185" strokeWidth={2} fill="none" /></svg>
);
const VScrollThumb = () => (
  <Thumb $h={15}><ThumbLine /><ThumbLine /><ThumbLine /></Thumb>
);

export default function App() {
  return (
    <Screen>
      <Global />
      <TitleBar>
        <LtLogo />
        <TitleText>AutoCAD LT - [Drawing1.dwg]</TitleText>
        <CapButton>
          <svg width={12} height={12} viewBox="0 0 12 12"><rect x={1} y={8} width={6} height={3} fill="#fff" /></svg>
        </CapButton>
        <CapButton>
          <svg width={14} height={14} viewBox="0 0 14 14"><path d="M1.5 2.5H12.5V12.5H1.5Z" fill="none" stroke="#fff" /><path d="M1 2H13V4H1Z" fill="#fff" /></svg>
        </CapButton>
        <CapButton $red>
          <svg width={14} height={14} viewBox="0 0 14 14"><path d="M2 2L12 12M12 2L2 12" stroke="#fff" strokeWidth={2} /></svg>
        </CapButton>
      </TitleBar>
      <MenuBar>
        <MenuIcon>
          <svg width={17} height={17} viewBox="0 0 17 17">
            <rect x={0} y={0} width={15} height={16} fill="#0A3FBF" />
            <path d="M3.5 3.5H11.5V11.5H3.5ZM7.5 0V15M0 7.5H15" stroke="#fff" strokeDasharray="2 1" fill="none" />
            <path d="M16 16H11L16 11Z" fill="#fff" />
          </svg>
        </MenuIcon>
        {menus.map(([a, k, w, sp]) => (
          <MenuItem key={k} $w={w} $sp={sp}>{a}(<u>{k}</u>)</MenuItem>
        ))}
        <MdiControls>
          <MdiButton><svg width={9} height={9} viewBox="0 0 9 9"><rect x={1} y={6} width={6} height={2} fill="#555" /></svg></MdiButton>
          <MdiButton><svg width={11} height={11} viewBox="0 0 11 11"><path d="M3.5 2.5H9.5V7.5M1.5 4.5H7.5V9.5H1.5Z" fill="none" stroke="#555" /></svg></MdiButton>
          <MdiButton><svg width={10} height={10} viewBox="0 0 10 10"><path d="M1 1L9 9M9 1L1 9" stroke="#555" strokeWidth={2} /></svg></MdiButton>
        </MdiControls>
      </MenuBar>

      <Band $h={29} $pb={1}>
        <Toolbar $w={812}>
          <Grip />
          <ToolBtn $w={1} />
          <Items list={row1} />
        </Toolbar>
      </Band>

      <Band $h={29} $pt={1} $pb={1}>
        <Toolbar $w={792}>
          <Grip />
          <Items list={row2a} />
          <Combo $w={179} $gap={6}>
            <ToolBtn $w={16}><Icon n="bulb" /></ToolBtn>
            <ToolBtn $w={13}><Icon n="sun" /></ToolBtn>
            <ToolBtn $w={22}><Icon n="vp" /></ToolBtn>
            <ToolBtn $w={13}><Icon n="lock" /></ToolBtn>
            <ComboSwatch />
            <LayerName>補助線</LayerName>
            <Spring />
            <ArrowBtn />
          </Combo>
          <Combo $w={97} $gap={7}>
            <ComboSwatch />
            <WideLabel>ByLayer</WideLabel>
            <Spring />
            <ArrowBtn />
          </Combo>
          <Combo $w={162} $gap={9}>
            <LineSample $dotted $w={55} />
            <WideLabel>ByLayer</WideLabel>
            <Spring />
            <ArrowBtn />
          </Combo>
          <Combo $w={128} $gap={8}>
            <LineSample $w={36} />
            <WideLabel>ByLayer</WideLabel>
            <Spring />
            <ArrowBtn />
          </Combo>
          <Combo $w={122} $gap={9} $off>
            <WideLabel $off $ml={7}>ByColor</WideLabel>
            <Spring />
            <ArrowBtn $off />
          </Combo>
        </Toolbar>
        <Toolbar $w={220} $ml={2}>
          <Grip />
          <Items list={row2b} />
        </Toolbar>
      </Band>

      <Band $h={28}>
        <Toolbar $w={353}>
          <Grip />
          <Items list={row3a} />
        </Toolbar>
        <Toolbar $w={143}>
          <Grip />
          <Items list={row3b} />
        </Toolbar>
        <Toolbar $w={406}>
          <Grip />
          <Items list={row3c} />
        </Toolbar>
      </Band>

      <Main>
        <Dock>
          <ToolColumn $w={26} $h={390}>
            <GripH $h={11} />
            <ColItems list={col1} />
          </ToolColumn>
          <ToolColumn $w={26} $h={406}>
            <GripH $h={9} />
            <ColItems list={col2} />
          </ToolColumn>
          <ToolColumn $w={27} $h={406}>
            <GripH $h={9} />
            <ColItems list={col3} />
          </ToolColumn>
        </Dock>
        <Workspace>
          <CanvasRow>
            <Canvas>
              <svg width={919} height={498} viewBox="84 134 919 498">
                <path d="M186.5 138.5H899.5V629.5H186.5Z" fill="none" stroke="#000" />
                <path d="M358.5 239.5H708.5V485.5H358.5Z" fill="none" stroke="#000" />
                <path d="M395.5 265.5H671.5L682.5 276.5V440.5L671.5 451.5H395.5L384.5 440.5V276.5Z" fill="none" stroke="#000" />
                {vDots.map((x) => (
                  <path key={x} d={`M${x} 179V577`} stroke="#0000ff" strokeDasharray="1 4.4" />
                ))}
                {hDots.map((y) => (
                  <path key={y} d={`M323 ${y}H739`} stroke="#0000ff" strokeDasharray="1 3.5" />
                ))}
                <path d="M307 362.5H757M533.5 179V577" stroke="#ff0000" />
                <path d="M738 255.5H787M763.5 231V281" stroke="#000" />
                <path d="M760.5 252.5H766.5V258.5H760.5Z" stroke="#000" fill="#fff" />
                <path d="M761 253L766 258M766 253L761 258" stroke="#000" fill="none" />
                <path d="M92.5 611.5H102.5V621.5H92.5Z" fill="#fff" stroke="#000" />
                <path d="M97.5 611V571M103 617.5H145" stroke="#000" />
                <path d="M97.5 558L92.5 570H102.5Z" fill="#fff" stroke="#000" />
                <path d="M97.5 560L96 569H99Z" fill="#888" />
                <path d="M145.5 612.5L158 617.5 145.5 622Z" fill="#fff" stroke="#000" />
                <path d="M147 617.5H157" stroke="#888" />
                <text x={95} y={550} fontSize={15} fontFamily="Liberation Sans, sans-serif" fill="#111">Y</text>
                <text x={166} y={623} fontSize={15} fontFamily="Liberation Sans, sans-serif" fill="#111">X</text>
              </svg>
            </Canvas>
            <VScroll>
              <XpArrow><XpChevron up /></XpArrow>
              <VScrollThumb />
            </VScroll>
          </CanvasRow>
          <TabRow>
            <NavGroup>
              <NavBtn><svg width={8} height={9} viewBox="0 0 8 9"><path d="M7 0V9L3 4.5ZM1.5 0V9" stroke="#000" /></svg></NavBtn>
              <NavBtn><Tri $dir="l" /></NavBtn>
              <NavBtn><Tri $dir="r" /></NavBtn>
              <NavBtn><svg width={8} height={9} viewBox="0 0 8 9"><path d="M1 0V9L5 4.5ZM6.5 0V9" stroke="#000" /></svg></NavBtn>
            </NavGroup>
            <Tab $w={44} $ml={4} $on>
              <TabShape width={44} height={15}><path d="M1 0L6 14H38L43 0" fill="#fff" stroke="#000" /></TabShape>
              ﾓﾃﾞﾙ
            </Tab>
            <Tab $w={60} $ml={-2}>
              <TabShape width={60} height={15}><path d="M6 0L2 14H56L60 0" fill={CREAM} stroke="#000" /></TabShape>
              ﾚｲｱｳﾄ1
            </Tab>
            <Tab $w={62} $ml={-4}>
              <TabShape width={62} height={15}><path d="M6 0L2 14H57L61 0" fill={CREAM} stroke="#000" /></TabShape>
              ﾚｲｱｳﾄ2
            </Tab>
            <HPart />
            <ClassicBtn $w={7} />
            <ClassicBtn $w={16}><Tri $dir="l" /></ClassicBtn>
            <HTrack $w={273}>
              <ClassicBtn $w={17} $ml={128} />
            </HTrack>
            <ClassicBtn $w={16}><Tri $dir="r" /></ClassicBtn>
            <ToolBtn $w={21} />
          </TabRow>
        </Workspace>
      </Main>

      <Splitter />
      <CommandArea>
        <LogRow>
          <Log>{"ｺﾏﾝﾄﾞ:  *ｷｬﾝｾﾙ*\nｺﾏﾝﾄﾞ:  *ｷｬﾝｾﾙ*"}</Log>
          <LogScroll>
            <XpArrow $h={12}><XpChevron up /></XpArrow>
            <XpArrow $h={12}><XpChevron up={false} /></XpArrow>
          </LogScroll>
        </LogRow>
        <InputRow>
          <Prompt>{"ｺﾏﾝﾄﾞ:  "}<Caret /></Prompt>
          <InputScroll>
            <ClassicBtn $w={16}><Tri $dir="l" /></ClassicBtn>
            <HTrack $w={33}><ClassicBtn $w={17} /></HTrack>
            <ClassicBtn $w={16}><Tri $dir="r" /></ClassicBtn>
          </InputScroll>
        </InputRow>
      </CommandArea>
      <StatusBar>
        <Coords>15505.7037, 10078.4693</Coords>
        <StatusBtn $w={39} $ml={0}>ｽﾅｯﾌﾟ</StatusBtn>
        <StatusBtn $w={48} $ml={3}>ｸﾞﾘｯﾄﾞ</StatusBtn>
        <StatusBtn $w={65} $ml={2} $on>直交ﾓｰﾄﾞ</StatusBtn>
        <StatusBtn $w={18} $ml={3}>極</StatusBtn>
        <StatusBtn $w={52} $ml={4} $on><Latin $size={14}>OSNAP</Latin></StatusBtn>
        <StatusBtn $w={29} $ml={2}><Latin $size={12.5}>LWT</Latin></StatusBtn>
        <StatusBtn $w={38} $ml={2} $on>ﾓﾃﾞﾙ</StatusBtn>
      </StatusBar>

      <Taskbar>
        <StartBtn><Flag />スタート</StartBtn>
        <TaskBtn $w={156} $ml={11}>
          <svg width={16} height={16} viewBox="0 0 16 16">
            <rect x={0.5} y={0.5} width={15} height={15} fill="#0A6A2A" stroke="#fff" />
            <path d="M3 3H13V13H3Z" fill="#fff" />
            <path d="M4 4L12 12M12 4L4 12" stroke="#0A6A2A" strokeWidth={2} />
          </svg>
          Microsoft Excel - Bc...
        </TaskBtn>
        <TaskBtn $w={160} $ml={2} $on>
          <LtLogo />
          AutoCAD LT - [Draw...
        </TaskBtn>
        <TrayIcons>
          <TrayItem $w={20}><TrayPic n="kbd" /></TrayItem>
          <TrayItem $w={20}><TrayPic n="ball" /></TrayItem>
          <TrayItem $w={20}>あ</TrayItem>
          <TrayItem $w={20}>般</TrayItem>
          <TrayItem $w={20}><TrayPic n="tools" /></TrayItem>
          <TrayItem $w={20}><TrayPic n="box" /></TrayItem>
          <TrayItem $w={24}><TrayPic n="help" /></TrayItem>
          <CapsKana>CAPS<br />KANA</CapsKana>
        </TrayIcons>
        <Tray>
          <Chevron>
            <svg width={8} height={10} viewBox="0 0 8 10"><path d="M6 1L2 5 6 9" stroke="#fff" strokeWidth={2} fill="none" /></svg>
          </Chevron>
          <Flag s={17} />
          <Clock>18:55</Clock>
        </Tray>
      </Taskbar>

      <Overlay width={1023} height={767} viewBox="0 0 1023 767">
        <path d="M185 135H198L193.5 216.5H148.5Z" fill="#fff" />
        <path d="M148.5 216.5L200 101.5 193.5 216.5" fill="none" stroke="#f00" />
        <path d="M148.5 216.5H134L122 219.5 119.5 224V236L122 240.5 134 244H280L291 240.5 294 236V224L291 219.5 280 216.5H193.5" fill="#fff" stroke="#f00" />
        <text x={129} y={234.5} fontSize={14} fontFamily={`"Noto Sans CJK JP", sans-serif`} fill="#111">2.</text>
        <text x={150} y={234.5} fontSize={14} letterSpacing={0.3} fontFamily={`"Noto Sans CJK JP", sans-serif`} fill="#111">補助線の画層にする</text>
        <path d="M200.5 417.5L328.5 443 233 417.5" fill="#fff" stroke="#f00" />
        <path d="M200.5 417.5H130L119 414.5 117.5 411V394L119 390 130 388.5H245L255 391 257 394V411L255 414 245 417.5H233" fill="#fff" stroke="#f00" />
        <text x={127} y={406} fontSize={14} fontFamily={`"Noto Sans CJK JP", sans-serif`} fill="#111">3.</text>
        <text x={147} y={406} fontSize={14} fontFamily={`"Noto Sans CJK JP", sans-serif`} fill="#111">補助線を描く</text>
      </Overlay>
    </Screen>
  );
}
